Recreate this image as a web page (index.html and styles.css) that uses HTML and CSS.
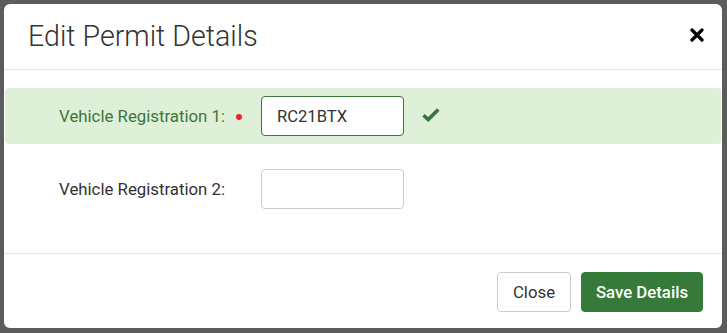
FILE: index.html
```html
<!DOCTYPE html>
<html>
<head>
<meta charset="utf-8">
<link rel="stylesheet" href="styles.css">
</head>
<body>
<div class="modal">
  <div class="modal-header">
    <h4 class="modal-title">Edit Permit Details</h4>
    <button class="close" aria-label="Close">
      <svg width="14" height="14" viewBox="0 0 14 14"><path d="M2 2 L12 12 M12 2 L2 12" stroke="#000" stroke-width="3.2" stroke-linecap="round"/></svg>
    </button>
  </div>
  <div class="modal-body">
    <div class="form-row success">
      <label class="row-label">Vehicle Registration 1:</label>
      <span class="req-slot"><span class="req-dot"></span></span>
      <input class="field" type="text" value="RC21BTX">
      <svg class="ok" width="18" height="15" viewBox="0 0 18 15"><path d="M1.5 8.2 L6.2 12.6 L16.3 2.5" fill="none" stroke="#3c763d" stroke-width="3.6"/></svg>
    </div>
    <div class="form-row">
      <label class="row-label">Vehicle Registration 2:</label>
      <span class="req-slot"></span>
      <input class="field" type="text" value="">
    </div>
  </div>
  <div class="modal-footer">
    <button class="btn btn-default">Close</button>
    <button class="btn btn-primary">Save Details</button>
  </div>
</div>
</body>
</html>
```

FILE: styles.css
```css
html, body {
  margin: 0;
  padding: 0;
  background: #5c5c5c;
  font-family: Roboto, "Liberation Sans", sans-serif;
}
body {
  padding: 4px;
  width: 727px;
  height: 333px;
  box-sizing: border-box;
}
.modal {
  width: 718px;
  height: 324px;
  background: #fff;
  border-radius: 6px;
  display: flex;
  flex-direction: column;
  overflow: hidden;
}
.modal-header {
  height: 65px;
  border-bottom: 1px solid #e5e5e5;
  display: flex;
  align-items: center;
  justify-content: space-between;
  padding: 0 18px 0 24px;
  box-sizing: content-box;
}
.modal-title {
  margin: 0;
  font-size: 28.6px;
  font-weight: 300;
  color: #333;
  line-height: 1;
  padding-top: 0;
}
.close {
  border: 0;
  background: none;
  padding: 0;
  width: 14px;
  height: 14px;
  display: flex;
  cursor: pointer;
  margin-top: -3px;
}
.modal-body {
  padding: 18px 0 36px 0;
  display: flex;
  flex-direction: column;
  gap: 17px;
}
.form-row {
  display: flex;
  align-items: center;
  height: 56px;
  margin: 0 1px 0 1px;
  border-radius: 4px;
}
.form-row.success {
  background: #dff0d8;
}
.row-label {
  width: 220px;
  text-align: right;
  font-size: 16.8px;
  color: #333;
  flex: none;
}
.success .row-label {
  color: #3c763d;
}
.req-slot {
  width: 36px;
  flex: none;
  display: flex;
  align-items: center;
}
.req-dot {
  width: 6px;
  height: 6px;
  border-radius: 50%;
  background: #ee2424;
  margin-left: 11px;
  margin-top: 1px;
}
.field {
  width: 143px;
  height: 40px;
  box-sizing: border-box;
  border: 1px solid #ccc;
  border-radius: 4px;
  padding: 0 15px;
  font-family: Roboto, "Liberation Sans", sans-serif;
  font-size: 16.6px;
  color: #333;
  outline: none;
  flex: none;
}
.success .field {
  border-color: #3c763d;
}
.ok {
  margin-left: 18px;
  margin-top: -4px;
}
.modal-footer {
  border-top: 1px solid #e5e5e5;
  flex: 1;
  display: flex;
  justify-content: flex-end;
  align-items: flex-start;
  padding: 18px 19px 0 0;
  gap: 10px;
}
.btn {
  height: 40px;
  border-radius: 4px;
  font-family: Roboto, "Liberation Sans", sans-serif;
  font-size: 16.8px;
  padding: 0;
  box-sizing: border-box;
}
.btn-default {
  width: 74px;
  background: #fff;
  border: 1px solid #ccc;
  color: #333;
}
.btn-primary {
  width: 122px;
  background: #357a38;
  border: 1px solid #357a38;
  color: #fff;
  font-weight: 500;
}
```
